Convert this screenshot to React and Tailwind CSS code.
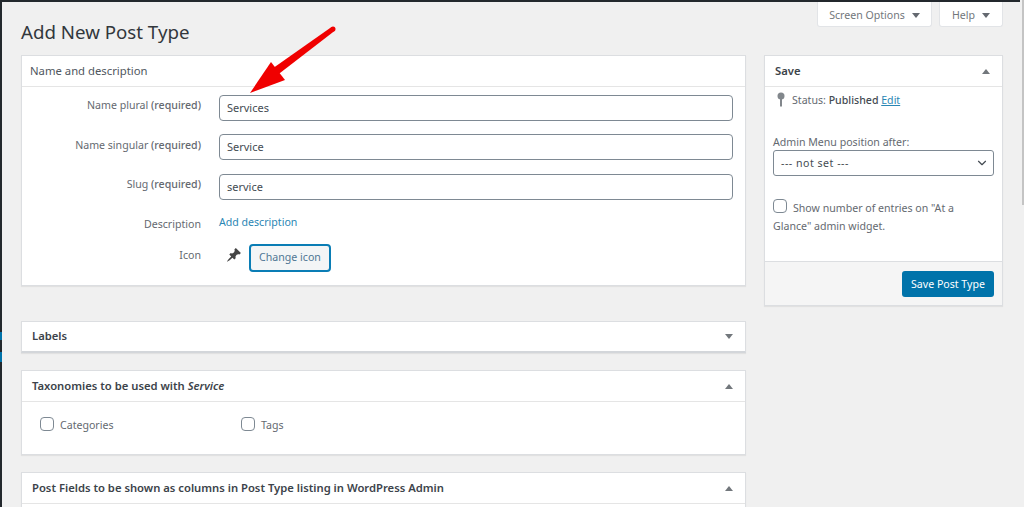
import { ChevronDown } from "lucide-react";

const font = "font-['Noto_Sans',sans-serif]";

// collapse arrow of a metabox
function Arrow({ up, className = "text-[#72777c]" }) {
  return (
    <svg width="8" height="5" viewBox="0 0 8 5" className={className}>
      <path d={up ? "M4 0 L8 5 H0 Z" : "M4 5 L8 0 H0 Z"} fill="currentColor" />
    </svg>
  );
}

function Box({ title, up, h = "h-[31px]", className = "", children }) {
  return (
    <div className={`bg-white border border-[#dcdee1] shadow-[0_1px_1px_rgba(0,0,0,0.06)] ${className}`}>
      <div className={`${h} flex items-center justify-between pl-[10px] pr-[12px] text-[11.25px] font-semibold text-[#3c434a] ${children ? "border-b border-[#e5e5e5]" : ""}`}>
        <span>{title}</span>
        <Arrow up={up} />
      </div>
      {children}
    </div>
  );
}

function Field({ label, value, labelOffset = "-mt-[5px]" }) {
  return (
    <div className="flex items-center h-[26px]">
      <div className={`w-[179px] text-right text-[10.6px] text-[#646970] ${labelOffset}`}>
        {label} <span className="font-medium">(required)</span>
      </div>
      <div className="ml-[18px] w-[514px] h-[26px] border border-[#7e8993] rounded-[4px] pl-[7px] flex items-center text-[11px] text-[#444b52]">
        {value}
      </div>
    </div>
  );
}

function Check({ label, className = "" }) {
  return (
    <div className={`flex items-center gap-[6px] text-[10.6px] text-[#646970] ${className}`}>
      <span className="w-[14px] h-[14px] border border-[#7e8993] rounded-[4px] bg-white -mt-[5px]" />
      {label}
    </div>
  );
}

export default function App() {
  return (
    <div className={`relative h-[507px] w-[1024px] overflow-hidden bg-[#f0f0f0] flex flex-col ${font}`}>
      <div className="h-[2px] w-[1020px] bg-[#23282d] shrink-0" />

      <div className="flex flex-1 min-h-0">
        {/* admin menu edge */}
        <div className="w-[2px] h-full bg-[#23282d] flex flex-col shrink-0">
          <div className="h-[330px]" />
          <div className="h-[8px] bg-[#0073aa]" />
          <div className="h-[12px]" />
          <div className="h-[10px] bg-[#0073aa]" />
        </div>

        <div className="w-[1022px] pl-[19px]">
          {/* screen options tabs */}
          <div className="flex justify-end gap-[7px] pr-[21px] text-[10.6px] text-[#72777c]">
            <div className="w-[115px] h-[25px] pt-[3px] bg-white border border-t-0 border-[#e2e4e7] rounded-b-[3px] flex items-center justify-center gap-[7px]">
              Screen Options <Arrow className="text-[#646970]" />
            </div>
            <div className="w-[64px] h-[25px] pt-[3px] bg-white border border-t-0 border-[#e2e4e7] rounded-b-[3px] flex items-center justify-center gap-[7px]">
              Help <Arrow className="text-[#646970]" />
            </div>
          </div>

          <h1 className="text-[18.7px] leading-[26px] text-[#32373c] -mt-[8px] mb-[10px]">Add New Post Type</h1>

          <div className="flex gap-[18px] items-start">
            {/* main column */}
            <div className="w-[725px] shrink-0">
              <div className="bg-white border border-[#dcdee1] shadow-[0_1px_1px_rgba(0,0,0,0.06)]">
                <div className="h-[31px] flex items-center pl-[8px] border-b border-[#e5e5e5] text-[11.3px] text-[#50575e]">
                  Name and description
                </div>
                <div className="h-[198px] pt-[8px] flex flex-col">
                  <Field label="Name plural" value="Services" />
                  <div className="h-[13px]" />
                  <Field label="Name singular" value="Service" labelOffset="-mt-[3px]" />
                  <div className="h-[14px]" />
                  <Field label="Slug" value="service" />
                  <div className="flex items-center mt-[15px] text-[10.6px] h-[18px]">
                    <div className="w-[179px] text-right text-[#646970] mt-[1px]">Description</div>
                    <a className="ml-[18px] text-[#2a86b4] -mt-[2px]">Add description</a>
                  </div>
                  <div className="flex items-start mt-[13px] text-[10.6px]">
                    <div className="w-[179px] text-right text-[#646970] mt-[2px]">Icon</div>
                    <svg width="16" height="16" viewBox="0 0 20 20" className="ml-[25px] mt-[1px] text-[#444]">
                      <path
                        fill="currentColor"
                        d="M10.44 3.02l1.82-1.82 6.36 6.35-1.83 1.82c-1.05-.68-2.48-.57-3.41.36l-.75.75c-.92.93-1.04 2.35-.35 3.41l-1.83 1.82-2.41-2.41-2.8 2.79c-.42.42-3.38 2.71-3.8 2.29s1.86-3.39 2.28-3.81l2.79-2.79L4.1 9.36l1.83-1.82c1.05.69 2.48.57 3.4-.36l.75-.75c.93-.92 1.05-2.35.36-3.41z"
                      />
                    </svg>
                    <div className="ml-[7px] w-[82px] h-[28px] -mt-[2px] bg-[#f3f5f6] border-2 border-[#0a7db5] rounded-[4px] flex items-center justify-center text-[#4f7794]">
                      Change icon
                    </div>
                  </div>
                </div>
              </div>

              <Box title="Labels" h="h-[29px]" className="mt-[35px] border-b-2 border-b-[#d3d6da]" />

              <Box
                title={<>Taxonomies to be used with <em>Service</em></>}
                up
                className="mt-[17px]"
              >
                <div className="h-[52px] pl-[18px] pt-[8px] flex">
                  <Check label="Categories" className="w-[201px] h-[32px]" />
                  <Check label="Tags" className="h-[32px]" />
                </div>
              </Box>

              <Box title="Post Fields to be shown as columns in Post Type listing in WordPress Admin" up className="mt-[17px] h-[80px]">
                <div />
              </Box>
            </div>

            {/* side column */}
            <div className="w-[239px] shrink-0 bg-white border border-[#dcdee1] shadow-[0_1px_1px_rgba(0,0,0,0.06)]">
              <div className="h-[31px] flex items-center justify-between pl-[10px] pr-[12px] border-b border-[#e5e5e5] text-[11.25px] font-semibold text-[#3c434a]">
                <span>Save</span>
                <Arrow up />
              </div>
              <div className="h-[174px] pl-[8px] pr-[8px] pt-[6px] text-[10.6px] text-[#646970]">
                <div className="flex items-center gap-[7px] pl-[4px]">
                  <svg width="8" height="15" viewBox="0 0 8 15" className="text-[#82878c] -mt-[2px]">
                    <circle cx="4" cy="4" r="3.5" fill="currentColor" />
                    <rect x="3" y="6" width="2" height="8.5" fill="currentColor" />
                  </svg>
                  <span>
                    Status: <span className="font-medium text-[#444b52]">Published</span>{" "}
                    <a className="text-[#2a86b4] underline">Edit</a>
                  </span>
                </div>
                <div className="mt-[25px] leading-[16px]">Admin Menu position after:</div>
                <div className="h-[26px] border border-[#7e8993] rounded-[3px] flex items-center justify-between pl-[7px] pr-[4px] text-[#444b52]">
                  <span className="tracking-[0.5px] mt-[2px]">--- not set ---</span>
                  <ChevronDown size={14} strokeWidth={2} className="text-[#444b52]" />
                </div>
                <div className="mt-[23px] leading-[18px]">
                  <span className="inline-block w-[14px] h-[14px] border border-[#7e8993] rounded-[4px] align-[-1px] mr-[6px]" />
                  Show number of entries on "At a Glance" admin widget.
                </div>
              </div>
              <div className="h-[44px] bg-[#f5f5f5] border-t border-[#dcdee1] flex items-center justify-end pr-[8px]">
                <div className="w-[92px] h-[26px] pt-[2px] bg-[#0073aa] rounded-[3px] flex items-center justify-center text-[10.6px] text-white">
                  Save Post Type
                </div>
              </div>
            </div>
          </div>
        </div>
      </div>

      {/* scrollbar thumb */}
      <div className="absolute top-0 right-0 w-[2px] h-[205px] bg-[#c4c4c4]" />

      {/* red annotation arrow */}
      <svg width="100" height="80" viewBox="0 0 100 80" className="absolute left-[240px] top-[20px]">
        <circle cx="93" cy="9" r="2.5" fill="#f00000" />
        <path d="M94.5 11 L91.5 7 L33.6 47.8 L38.4 54.2 Z" fill="#f00000" />
        <path d="M10 73 L31 42 L45 60 Z" fill="#f00000" />
      </svg>
    </div>
  );
}
